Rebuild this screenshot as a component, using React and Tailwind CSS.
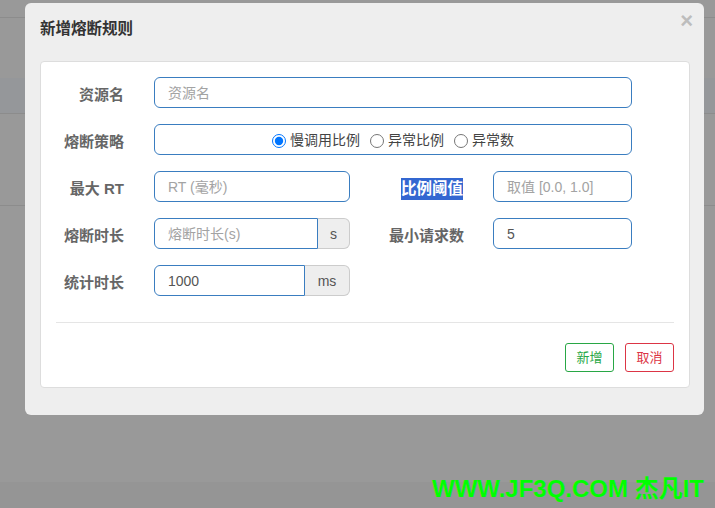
const font = { fontFamily: '"Liberation Sans", "Noto Sans CJK SC", sans-serif' };

function Label({ children, className = "" }) {
  return (
    <div className={`text-right text-[15px] font-bold text-[#666] pt-[5px] ${className}`}>{children}</div>
  );
}

function Field({ placeholder, value, className = "", rounded = "rounded-md" }) {
  return (
    <div
      className={`h-[31px] border border-[#3a7dc0] ${rounded} px-[13px] pt-[2px] flex items-center text-[14px] ${
        value ? "text-[#555]" : "text-[#a3a3a3]"
      } ${className}`}
    >
      {value || placeholder}
    </div>
  );
}

function Addon({ children, className = "" }) {
  return (
    <div
      className={`h-[31px] border border-l-0 border-[#ccc] bg-[#eee] rounded-r-md pt-[2px] flex items-center justify-center text-[14px] text-[#555] ${className}`}
    >
      {children}
    </div>
  );
}

function Radio({ checked, label }) {
  return (
    <label className="flex items-center gap-[4px]">
      <input type="radio" checked={checked} readOnly className="w-[14px] h-[14px] m-0" />
      <span>{label}</span>
    </label>
  );
}

export default function App() {
  return (
    <div className="relative w-[715px] h-[508px] bg-[#999] overflow-hidden" style={font}>
      {/* dimmed page behind */}
      <div className="flex flex-col">
        <div className="h-[17px]" />
        <div className="h-px bg-[#8c8c8c]" />
        <div className="h-[60px]" />
        <div className="h-[35px] bg-[#95979a]" />
        <div className="h-px bg-[#8c8c8c]" />
        <div className="h-[91px]" />
        <div className="h-px bg-[#8c8c8c]" />
        <div className="h-[276px]" />
        <div className="h-[26px] bg-[#959595]" />
      </div>

      {/* modal */}
      <div className="absolute left-[25px] top-[3px] w-[679px] h-[412px] bg-[#eee] rounded-md pl-[15px] pr-[14px]">
        <div className="h-[58px] flex items-center justify-between">
          <h3 className="text-[15.5px] font-bold text-[#333] -mt-[6px]">新增熔断规则</h3>
          <span className="text-[22px] leading-none font-bold text-[#bdbdbd] -mt-[23px] mr-[-3px]">×</span>
        </div>

        <div className="bg-white border border-[#ddd] rounded-[4px] px-[15px] pt-[15px] pb-[15px]">
          <div className="flex flex-col gap-[16px]">
            <div className="flex items-center">
              <Label className="w-[68px]">资源名</Label>
              <Field placeholder="资源名" className="ml-[30px] w-[478px]" />
            </div>

            <div className="flex items-center">
              <Label className="w-[68px]">熔断策略</Label>
              <div className="ml-[30px] w-[478px] h-[31px] border border-[#3a7dc0] rounded-md pt-[2px] flex items-center justify-center gap-[10px] text-[14px] text-[#444]">
                <Radio checked label="慢调用比例" />
                <Radio label="异常比例" />
                <Radio label="异常数" />
              </div>
            </div>

            <div className="flex items-center">
              <Label className="w-[68px]">最大 RT</Label>
              <Field placeholder="RT (毫秒)" className="ml-[30px] w-[196px]" />
              <div className="w-[113px] flex justify-end pt-[4px]">
                <span className="bg-[#3367d1] text-white text-[15.5px] font-bold leading-[22px]">比例阈值</span>
              </div>
              <Field placeholder="取值 [0.0, 1.0]" className="ml-[30px] w-[139px]" />
            </div>

            <div className="flex items-center">
              <Label className="w-[68px]">熔断时长</Label>
              <div className="ml-[30px] w-[196px] flex">
                <Field placeholder="熔断时长(s)" rounded="rounded-l-md" className="w-[164px]" />
                <Addon className="w-[32px]">s</Addon>
              </div>
              <Label className="w-[114px]">最小请求数</Label>
              <Field value="5" className="ml-[29px] w-[139px]" />
            </div>

            <div className="flex items-center">
              <Label className="w-[68px]">统计时长</Label>
              <div className="ml-[30px] w-[196px] flex">
                <Field value="1000" rounded="rounded-l-md" className="w-[151px]" />
                <Addon className="w-[45px]">ms</Addon>
              </div>
            </div>
          </div>

          <div className="mt-[26px] border-t border-[#e5e5e5]" />

          <div className="flex justify-end gap-[11px] mt-[20px]">
            <button
              type="button"
              className="w-[49px] h-[29px] border border-[#28a745] text-[#28a745] rounded-[3px] text-[13px] bg-white"
            >
              新增
            </button>
            <button
              type="button"
              className="w-[49px] h-[29px] border border-[#dc3545] text-[#dc3545] rounded-[3px] text-[13px] bg-white"
            >
              取消
            </button>
          </div>
        </div>
      </div>

      {/* watermark */}
      <div className="absolute left-[432px] top-[474px] text-[24px] font-bold text-[#00ff00] leading-[30px] whitespace-nowrap">
        WWW.JF3Q.COM 杰凡IT
      </div>
    </div>
  );
}
